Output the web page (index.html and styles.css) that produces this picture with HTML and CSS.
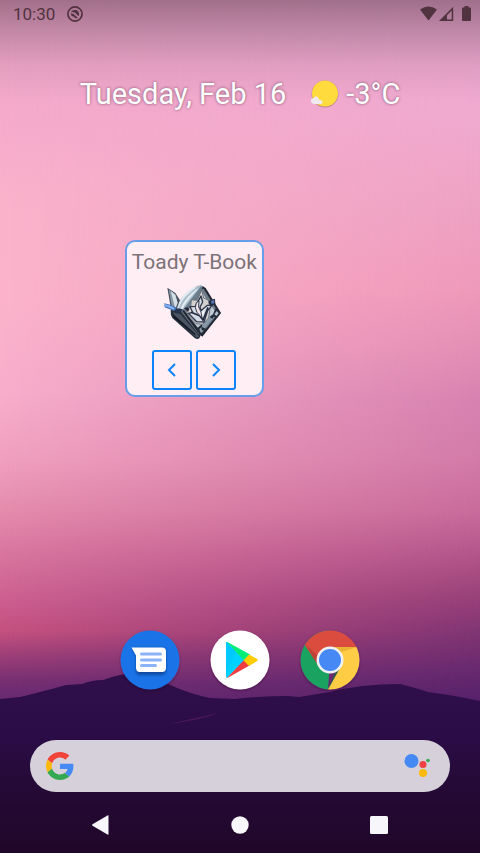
FILE: index.html
```html
<!DOCTYPE html>
<html lang="en">
<head>
<meta charset="utf-8">
<meta name="viewport" content="width=device-width, initial-scale=1">
<title>Home screen</title>
<link rel="stylesheet" href="styles.css">
</head>
<body>
<div class="phone">
  <div class="wallpaper" aria-hidden="true">
    <div class="sky"></div>
    <svg class="hills" viewBox="0 0 480 180" preserveAspectRatio="none">
      <defs>
        <linearGradient id="hill" x1="0" y1="0" x2="0" y2="1">
          <stop offset="0" stop-color="#31104a"/>
          <stop offset=".35" stop-color="#2b0c46"/>
          <stop offset=".65" stop-color="#240a35"/>
          <stop offset="1" stop-color="#200729"/>
        </linearGradient>
      </defs>
      <path fill="url(#hill)" d="M0 26 L20 24 Q45 18 66 12 L82 11 Q92 7 103 7 Q121 0 139 0 Q155 2 168 11 Q190 21 210 25 L235 26 Q260 23 288 23 L299 24 L330 19 Q360 11 400 11 Q416 15 428 19 Q452 22 480 28 V180 H0Z"/>
      <path d="M168 51 Q196 45 218 40 Q202 47 168 51Z" fill="#4a1858"/>
    </svg>
    <div class="scrim"></div>
  </div>

  <header class="status">
    <div class="status-group">
      <time>10:30</time>
      <svg class="notice" viewBox="0 0 16 16" width="16" height="16">
        <circle cx="8" cy="8" r="7.1" fill="none" stroke="currentColor" stroke-width="1.7"/>
        <path fill="currentColor" d="M4 6.3C5.3 3.5 9.5 3.2 11.2 5.4 12.6 7.3 12.2 9 11.5 10.2L8.2 6.8 5.8 6.1ZM3.7 7.3 6.6 8.1 10.9 12C8.6 12.5 7.7 12 7 10.7L4.6 10Z"/>
      </svg>
    </div>
    <svg class="signals" viewBox="0 0 52 16" width="52" height="16" role="img" aria-label="Wi-Fi, mobile signal and battery">
      <path fill="currentColor" d="M0 3.4Q8.500-2.600 17 3.400L8.500 14.500Z"/>
      <path fill="currentColor" fill-rule="evenodd" d="M19 15 33.200.8V15ZM27 13.500h4.700V4.600L27 9.300Z"/>
      <path fill="currentColor" d="M44.500 0h4v1.500H50q1 0 1 1V14q0 1-1 1h-7q-1 0-1-1V2.500q0-1 1-1h1.500Z"/>
    </svg>
  </header>

  <main class="home">
    <div class="glance">
      <span>Tuesday, Feb 16</span>
      <span class="weather">
        <svg viewBox="0 0 30 30" width="30" height="30" role="img" aria-label="Mostly sunny">
          <circle cx="15" cy="15" r="13.500" fill="#9b706c" opacity=".6"/>
          <circle cx="15" cy="14.500" r="13" fill="#ffdb3d"/>
          <path fill="#eeeaf0" d="M4 25Q.5 24.500 1 21 2 18.500 4 19 5.500 16 8 18.500q1.500 2 1.500 2.500Q13 21 12.500 23.500q-.5 1.500-2 1.500Z"/>
        </svg>
        <span>-3°C</span>
      </span>
    </div>

    <div class="workspace">
      <section class="widget">
        <h1>Toady T-Book</h1>
        <svg class="book" viewBox="0 0 192 186" width="64" height="62" role="img" aria-label="Silver book">
          <path fill="#454d5b" d="M16 20 40 36 54 58 48 92 28 90Z"/>
          <path fill="#8796a4" d="m20 25 20 16 7 24-11 22-6-8Z"/>
          <path fill="#d4dfe6" d="m26 29 14 12 7 24-7 19Z"/>
          <path fill="#27303d" d="M26 88 44 82 64 88 118 158 112 172Q106 176 98 171L31 111Q25 102 26 88Z"/>
          <path fill="#4b5563" d="m34 94 20 4 52 60 5 10-9 1-65-61Z"/>
          <path fill="#151a26" d="m32 98 66 59 4 9-66-55Z"/>
          <path fill="#69747f" d="m54 88 7-3 54 67-3 10Z"/>
          <path fill="#1f2533" d="M108 20Q117 9 131 21L177 96 121 167 112 160 58 86Z"/>
          <path fill="#707b88" d="m110 24 15-1 45 73-50 62-54-70Z"/>
          <path fill="#abbcc9" d="M43 94Q46 61 69 40 91 17 119 11L121 17 66 87Z"/>
          <path fill="#e1eaf0" d="M48 87Q57 58 78 40L105 17 92 20Q56 40 45 87ZM61 86Q72 60 112 22L100 27Q67 52 53 88Z"/>
          <path fill="#6d8090" d="M62 88 116 16 122 19 73 86Z"/>
          <path fill="#bfcbd4" d="m122 35 14 24 27 36-6 13-17 6-20 38-11-11-24-30-9-21Z"/>
          <path fill="#8697a7" d="m119 132 31-27 7 3-37 43-10-11Z"/>
          <path fill="#d4d0cf" stroke="#65707c" stroke-width="3" d="m119 26 6 25 19 9 10 4-9 11-5 36-18 19-20-2-22-23-10-20 16-6 2-23 18 2Z"/>
          <path fill="#d3dae4" stroke="#30364b" stroke-width="4" stroke-linejoin="round" d="m117 45 5 18-8 15 3 11 19-16 15-1-14 17-11 34-22-1-25-25 13-3-8-17 16-1Z"/>
          <path fill="none" stroke="#252c40" stroke-width="5" d="m87 94 26 10 10 13 15-38"/>
          <path fill="#eee3e8" stroke="#343a50" stroke-width="3" d="m103 65 8-5-1 18 7 15 3 18-15-17-5-14Z"/>
          <path fill="#f4f3f7" d="m119 95 11-14-7 26Z"/>
          <path fill="#252d42" d="m139 61 8-5 12-3 1 17-13 5-7-7Z"/>
          <path fill="#5b76b7" d="m148 59 9-2-1 10-8 1Z"/>
          <path fill="#252c3b" d="m163 78 13 18-11 15-10-4-4 6-9-5 11-8 5-12Z"/>
          <path fill="#b1c1d0" d="m164 90 6 7-7 8-6-5Z"/>
          <path fill="#252d3b" d="m107 140 12-10 2 9 12 5-17 19-10-12Z"/>
          <path fill="#91a1b0" d="m112 145 6-7 1 9 6 2-8 7Z"/>
          <path fill="#222938" d="m66 81 12-2 4 6-4 8Z"/>
          <path fill="#4971b4" d="M7 67 25 71 45 80 38 91 8 79Z"/>
          <path fill="#80b3fa" d="m8 69 17 5 12 6-1 6-26-10Z"/>
          <path fill="#25324c" d="m37 88 11-6 15 3-11 13-13-2Z"/>
        </svg>
        <div class="pager">
          <button type="button" aria-label="Previous"><svg viewBox="0 0 16 16" width="16" height="16"><path d="M11 2 5 8l6 6"/></svg></button>
          <button type="button" aria-label="Next"><svg viewBox="0 0 16 16" width="16" height="16"><path d="m5 2 6 6-6 6"/></svg></button>
        </div>
      </section>
    </div>
  </main>

  <nav class="dock" aria-label="Apps">
    <button type="button" aria-label="Messages">
      <svg viewBox="0 0 60 60">
        <defs><clipPath id="round"><circle cx="30" cy="30" r="29.500"/></clipPath><filter id="soft" x="-30%" y="-30%" width="160%" height="170%"><feGaussianBlur stdDeviation="1.500"/></filter></defs>
        <circle cx="30" cy="30" r="29.500" fill="#1b73e8"/>
        <path d="M12 18h30q4 0 4 4v18q0 5-5 5H20q-4 0-4-4V26Z" fill="#0c489e" filter="url(#soft)"/>
        <path d="M11.500 17.500H42q4 0 4 4v16q0 4.500-4 4.500H20q-4 0-4-4.500V25.500Z" fill="#fff"/>
        <path d="M21.500 24h19M21.500 30h19M21.500 35.500h14" stroke="#8ab3f8" stroke-width="3" stroke-linecap="round"/>
      </svg>
    </button>
    <button type="button" aria-label="Play Store">
      <svg viewBox="0 0 60 60">
        <circle cx="30" cy="30" r="29.500" fill="#fff"/>
        <path fill="#00d2ff" d="M16 13Q16 11.500 17.500 12L35 30 17 48Q16 48 16 46Z"/>
        <path fill="#00c0fa" d="M16 12.500 26 21 16 44Z" opacity=".45"/>
        <path fill="#00ed76" d="M16.500 11.500 40 24.500 34 30.500Z"/>
        <path fill="#ef3d42" d="M34 30 39.500 35.500 16.500 48.500Z"/>
        <path fill="#ffcc00" d="M39 24.500 47 29q1.500 1 0 2l-8 5-5.500-5.500Z"/>
      </svg>
    </button>
    <button type="button" aria-label="Chrome">
      <svg viewBox="0 0 60 60">
        <g clip-path="url(#round)">
          <path fill="#1aa260" d="M0 0H30V30L28 60H0Z"/>
          <path fill="#fecd45" d="M30 17H60V60H27.500L41 36Z"/>
          <path fill="#db4c3f" d="M4 14V0H60V17H30L18 35Z"/>
          <path fill="#9e382d" opacity=".45" d="M5 14 18 26 17 34Z"/>
          <path fill="#d79a24" opacity=".5" d="M30 17H57L38 23Z"/>
          <path fill="#08753e" opacity=".6" d="m40 38-5 4-7 18Z"/>
        </g>
        <circle cx="30" cy="30" r="13.500" fill="#f2f1f1"/>
        <circle cx="30" cy="30" r="11" fill="#4789f4"/>
      </svg>
    </button>
  </nav>

  <div class="search" role="group" aria-label="Search">
    <svg viewBox="0 0 48 48" width="28" height="28" role="img" aria-label="Google">
      <path fill="#f04438" d="M24 9.500c3.500 0 6.700 1.200 9.200 3.600l6.900-6.900C35.900 2.400 30.500 0 24 0 14.600 0 6.500 5.400 2.600 13.200l8 6.200C12.400 13.700 17.700 9.500 24 9.500z"/>
      <path fill="#4589f4" d="M47 24.600c0-1.600-.2-3.100-.4-4.600H24v9h12.900c-.6 3-2.300 5.500-4.800 7.200l7.700 6C44.400 38 47 31.800 47 24.600z"/>
      <path fill="#fcb90b" d="M10.500 28.600A14.500 14.500 0 0 1 10.500 19.400l-7.900-6.200a24 24 0 0 0 0 21.600z"/>
      <path fill="#34a853" d="M24 48c6.500 0 11.900-2.100 15.900-5.800l-7.800-6c-2.100 1.400-4.900 2.300-8.100 2.300-6.300 0-11.600-4.200-13.500-9.900l-7.900 6.200C6.500 42.600 14.600 48 24 48z"/>
    </svg>
    <input type="search" aria-label="Search the web">
    <button type="button" aria-label="Assistant">
      <svg viewBox="0 0 28 28" width="28" height="28">
        <circle cx="8.500" cy="9" r="7" fill="#4589f4"/>
        <circle cx="20" cy="12.500" r="3.500" fill="#ef4141"/>
        <circle cx="20" cy="21" r="4" fill="#fcb90b"/>
        <circle cx="25" cy="8.500" r="1.800" fill="#34a853"/>
      </svg>
    </button>
  </div>

  <nav class="system" aria-label="System">
    <button type="button" aria-label="Back"><svg viewBox="0 0 20 20" width="20" height="20"><path d="M17.500.8V19.200Q17.500 20 16.500 19.500L1.500 10.700Q.5 10 1.500 9.300L16.500.5Q17.500 0 17.500.8Z"/></svg></button>
    <button type="button" aria-label="Home"><svg viewBox="0 0 20 20" width="20" height="20"><circle cx="10" cy="10" r="8.700"/></svg></button>
    <button type="button" aria-label="Recent apps"><svg viewBox="0 0 20 20" width="20" height="20"><rect x="1" y="1" width="18" height="18" rx="1.500"/></svg></button>
  </nav>
</div>
</body>
</html>
```

FILE: styles.css
```css
* {
  box-sizing: border-box;
}

body {
  margin: 0;
  font-family: Roboto, "Liberation Sans", sans-serif;
}

button {
  display: grid;
  place-items: center;
  padding: 0;
  border: 0;
  background: none;
}

svg {
  display: block;
}

.phone {
  position: relative;
  isolation: isolate;
  display: flex;
  flex-direction: column;
  min-height: 100vh;
  background: #220829;
}

/* Wallpaper */
.wallpaper,
.sky,
.sky::after,
.scrim {
  position: absolute;
  inset: 0;
}

.wallpaper {
  z-index: -1;
  overflow: hidden;
}

.sky {
  background: linear-gradient(#f0aacf 0%, #f4a9cb 12%, #fab2cb 23%, #fbb3cb 35%, #f8aecb 46%, #f0a0be 54%, #e58bac 60%, #d9759f 65%, #cb5c8e 71%, #c5517f 74%, #9b3e78 77%, #762f72 80%, #632870 83%);
}

.sky::after {
  content: "";
  background: linear-gradient(#eaa9d1 0%, #f0a9cf 14%, #eea1c2 25%, #ef99b9 34%, #e38eb5 41%, #d682b0 47%, #d37aa8 54%, #c86b9b 60%, #b3558a 65%, #984079 70%, #7b3272 75%, #60266d 80%, #52206b 83%);
  mask-image: linear-gradient(to right, transparent, #000);
}

.hills {
  position: absolute;
  left: 0;
  bottom: 0;
  width: 100%;
  height: 180px;
}

.scrim {
  bottom: auto;
  height: 100px;
  background: linear-gradient(rgb(45 25 35 / 40%), rgb(45 25 35 / 24%) 30%, rgb(45 25 35 / 8%) 65%, transparent);
}

/* Status bar */
.status {
  display: flex;
  justify-content: space-between;
  align-items: center;
  height: 28px;
  padding: 0 8px 0 13px;
  color: #51323f;
}

.status-group {
  display: flex;
  align-items: center;
  gap: 12px;
  font-size: 17px;
  line-height: 28px;
}

/* Date, weather and widgets */
.home {
  flex: 1;
}

.glance {
  display: flex;
  justify-content: center;
  align-items: center;
  gap: 24px;
  margin-top: 44px;
  color: #fff;
  font-size: 29px;
  line-height: 44px;
  text-shadow: 0 0 3px rgb(60 30 50 / 65%);
}

.weather {
  display: flex;
  align-items: center;
  gap: 6px;
}

.workspace {
  display: grid;
  grid-template-columns: repeat(5, 1fr);
  margin-top: 124px;
  padding: 0 12px;
}

.widget {
  grid-column: 2 / span 2;
  justify-self: center;
  display: flex;
  flex-direction: column;
  align-items: center;
  padding: 5px;
  border: 2px solid #679de9;
  border-radius: 10px;
  background: #ffeef4;
}

.widget h1 {
  margin: 0;
  color: #7c7278;
  font-size: 21px;
  font-weight: 400;
  line-height: 30px;
  white-space: nowrap;
}

.book {
  margin: 4px 0 7px;
}

.pager {
  display: flex;
  gap: 4px;
}

.pager button {
  width: 40px;
  height: 40px;
  border: 2px solid #0b84fb;
  border-radius: 3px;
}

.pager path {
  fill: none;
  stroke: #0b84fb;
  stroke-width: 2;
}

/* App dock */
.dock {
  display: flex;
  justify-content: center;
  gap: 30px;
  margin-bottom: 50px;
}

.dock button,
.dock svg {
  width: 60px;
  height: 60px;
}

.dock button {
  border-radius: 50%;
  box-shadow: 0 1px 2px rgb(30 0 30 / 35%);
}

/* Search */
.search {
  display: flex;
  align-items: center;
  height: 52px;
  margin: 0 30px;
  padding: 0 19px 0 16px;
  border-radius: 26px;
  background: #d6d0da;
}

.search input {
  flex: 1;
  min-width: 0;
  height: 40px;
  border: 0;
  outline: 0;
  background: transparent;
  font: inherit;
}

/* System navigation */
.system {
  display: grid;
  grid-template-columns: repeat(3, 1fr);
  padding: 0 32px;
}

.system button {
  height: 61px;
  padding-top: 5px;
}

.system svg {
  fill: #f7f6fa;
}
```
